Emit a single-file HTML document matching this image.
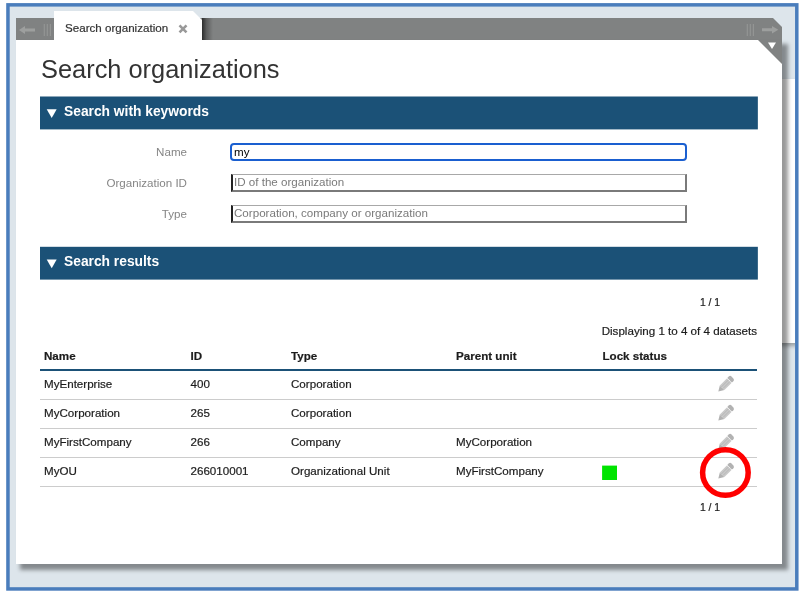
<!DOCTYPE html>
<html><head><meta charset="utf-8">
<style>
html,body{margin:0;padding:0;background:#fff;}
body{width:804px;height:594px;position:relative;overflow:hidden;font-family:"Liberation Sans",Arial,sans-serif;color:#222;}
.abs{position:absolute;}
#frame{left:6px;top:3px;width:786px;height:582px;border:3px solid #4c7fbd;background:#dde5eb;}
#clip{left:9px;top:6px;width:786px;height:582px;overflow:hidden;}
#rwhite{left:700px;top:73px;width:90px;height:263.5px;background:#fff;box-shadow:0 3px 4px rgba(0,0,0,.3);}
#panel{left:16px;top:40px;width:766px;height:524px;background:#fff;box-shadow:5px 5px 4px 1px rgba(0,0,0,.4);}
#bar{left:16px;top:18px;width:766px;height:22px;background:#808282;clip-path:polygon(0 0,757px 0,766px 9px,766px 22px,0 22px);}
#tab{left:54px;top:11px;width:148px;height:30px;background:#fff;clip-path:polygon(0 0,139px 0,148px 9px,148px 30px,0 30px);}
#tabshadow{left:202px;top:18px;width:11px;height:22px;background:linear-gradient(to right,#2c2d2d,#5c5d5d 40%,#808282);}
#tabtxt{left:65px;top:20px;transform:translateY(.6px);-webkit-text-stroke:.2px #333;font-size:11.6px;color:#333;line-height:13px;white-space:nowrap;}
h1{position:absolute;left:41px;top:54px;margin:0;font-size:25.4px;font-weight:normal;color:#333;line-height:30px;white-space:nowrap;}
.sec{left:40px;width:718px;height:33px;color:#fff;font-weight:bold;font-size:13.8px;line-height:32px;}
.sec span{position:absolute;left:24px;top:0;white-space:nowrap;}
.lbl{left:40px;width:147px;text-align:right;font-size:11.6px;color:#858585;line-height:14px;}
.inp{left:231px;width:456px;height:18px;box-sizing:border-box;background:#fff;font-size:11.6px;line-height:14px;padding-left:1px;color:#7a7a7a;white-space:nowrap;border-style:solid;border-width:1px 2px 2px 2px;border-color:#a8a8a8 #7a7a7a #7a7a7a #222;}
.t{font-size:11.6px;line-height:14px;color:#1c1c1c;-webkit-text-stroke:.2px #1c1c1c;white-space:nowrap;}
.th{font-weight:bold;}
.hl{left:40px;width:717px;height:1px;background:#ccc;}
</style></head><body><div id="all" class="abs" style="left:0;top:0;width:804px;height:594px;will-change:transform">
<svg class="abs" style="left:0;top:0" width="804" height="594" viewBox="0 0 804 594"><rect x="7.95" y="4.85" width="788.85" height="584.1" fill="#dde5eb" stroke="#4a7dbc" stroke-width="3.5"/></svg>
<div id="clip" class="abs"><div id="rwhite" class="abs"></div></div>
<div id="bar" class="abs"></div>
<div id="tabshadow" class="abs"></div>
<div id="panel" class="abs"></div>
<div id="tab" class="abs"></div>
<svg class="abs" style="left:0;top:0" width="804" height="594" viewBox="0 0 804 594">
 <!-- left arrow -->
 <path d="M19 30 L25 26 L25 28.5 L35 28.5 L35 31.5 L25 31.5 L25 34 Z" fill="#9d9f9e"/>
 <g stroke="#939594" stroke-width="1.2"><path d="M44.3 24v12M47.3 24v12M50.4 24v12"/></g>
 <!-- right arrow -->
 <path d="M778.3 29.8 L772 26 L772 28.3 L762 28.3 L762 31.3 L772 31.3 L772 33.6 Z" fill="#9d9f9e"/>
 <g stroke="#939594" stroke-width="1.2"><path d="M747.3 24v12M750.3 24v12M753.4 24v12"/></g>
 <!-- corner -->
 <path d="M758 40 L782 40 L782 64 Z" fill="#808282"/>
 <path d="M768 42.5 L776 42.5 L772 49 Z" fill="#fff"/>
 <!-- close x -->
 <path d="M179.5 25.4l7 7M186.5 25.4l-7 7" stroke="#999" stroke-width="2.6" fill="none"/>
</svg>
<div id="tabtxt" class="abs">Search organization</div>
<h1>Search organizations</h1>

<svg class="abs" style="left:0;top:0" width="804" height="594" viewBox="0 0 804 594">
 <rect x="40" y="96.5" width="717.85" height="32.9" fill="#1b5177"/>
 <rect x="40" y="246.8" width="717.85" height="32.8" fill="#1b5177"/>
 <path d="M46.7 109.2 L56.7 109.2 L51.7 118 Z" fill="#fff"/>
 <path d="M46.7 259.4 L56.7 259.4 L51.7 268.2 Z" fill="#fff"/>
</svg>
<div class="abs sec" style="top:96px"><span>Search with keywords</span></div>
<div class="abs sec" style="top:246px"><span>Search results</span></div>

<div class="abs lbl" style="top:145px">Name</div>
<div class="abs lbl" style="top:176px">Organization ID</div>
<div class="abs lbl" style="top:207px">Type</div>

<div class="abs inp" style="top:144px;border:2px solid #1a5fd0;border-radius:4px;color:#000;left:230px;width:457px;height:18px;top:143px;line-height:14px;padding-left:2px">my</div>
<div class="abs inp" style="top:174px">ID of the organization</div>
<div class="abs inp" style="top:205px">Corporation, company or organization</div>

<div class="abs t" style="left:690px;width:40px;text-align:center;top:295.7px;font-size:10.4px">1 / 1</div>
<div class="abs t" style="left:500px;width:257px;text-align:right;top:324px">Displaying 1 to 4 of 4 datasets</div>

<div class="abs t th" style="left:44px;top:349px">Name</div>
<div class="abs t th" style="left:190.5px;top:349px">ID</div>
<div class="abs t th" style="left:291px;top:349px">Type</div>
<div class="abs t th" style="left:456px;top:349px">Parent unit</div>
<div class="abs t th" style="left:602.5px;top:349px">Lock status</div>
<div class="abs" style="left:40px;top:369px;width:717px;height:2px;background:#1b5177"></div>

<div class="abs t" style="left:44px;top:377px">MyEnterprise</div>
<div class="abs t" style="left:190.5px;top:377px">400</div>
<div class="abs t" style="left:291px;top:377px">Corporation</div>
<div class="abs hl" style="top:399px"></div>

<div class="abs t" style="left:44px;top:406px">MyCorporation</div>
<div class="abs t" style="left:190.5px;top:406px">265</div>
<div class="abs t" style="left:291px;top:406px">Corporation</div>
<div class="abs hl" style="top:428px"></div>

<div class="abs t" style="left:44px;top:435px">MyFirstCompany</div>
<div class="abs t" style="left:190.5px;top:435px">266</div>
<div class="abs t" style="left:291px;top:435px">Company</div>
<div class="abs t" style="left:456px;top:435px">MyCorporation</div>
<div class="abs hl" style="top:457px"></div>

<div class="abs t" style="left:44px;top:464px">MyOU</div>
<div class="abs t" style="left:190.5px;top:464px">266010001</div>
<div class="abs t" style="left:291px;top:464px">Organizational Unit</div>
<div class="abs t" style="left:456px;top:464px">MyFirstCompany</div>

<div class="abs hl" style="top:486px"></div>

<div class="abs t" style="left:690px;width:40px;text-align:center;top:501px;font-size:10.4px">1 / 1</div>

<svg class="abs" style="left:0;top:0" width="804" height="594" viewBox="0 0 804 594">
 <defs>
  <g id="pen" transform="rotate(-45)">
   <path d="M0 0 L5.4 -3.3 L5.4 3.3 Z" fill="#b2b2b2"/>
   <rect x="5.4" y="-3.3" width="10" height="6.6" fill="#c9c9c9"/>
   <path d="M5.4 -1.1H15.4M5.4 1.1H15.4" stroke="#b4b4b4" stroke-width="0.8"/>
   <path d="M16 -3.3 H18 Q20 -3.3 20 -1.3 V1.3 Q20 3.3 18 3.3 H16 Z" fill="#b2b2b2"/>
  </g>
 </defs>
 <use href="#pen" x="718.3" y="391.6"/>
 <use href="#pen" x="718.3" y="420.6"/>
 <use href="#pen" x="718.3" y="449.6"/>
 <use href="#pen" x="718.3" y="478.6"/>
 <rect x="602.1" y="465.6" width="14.9" height="14.4" fill="#00e400"/>
 <circle cx="725.4" cy="472.5" r="22.8" fill="none" stroke="#f00" stroke-width="5.5"/>
</svg>
</div></body></html>
